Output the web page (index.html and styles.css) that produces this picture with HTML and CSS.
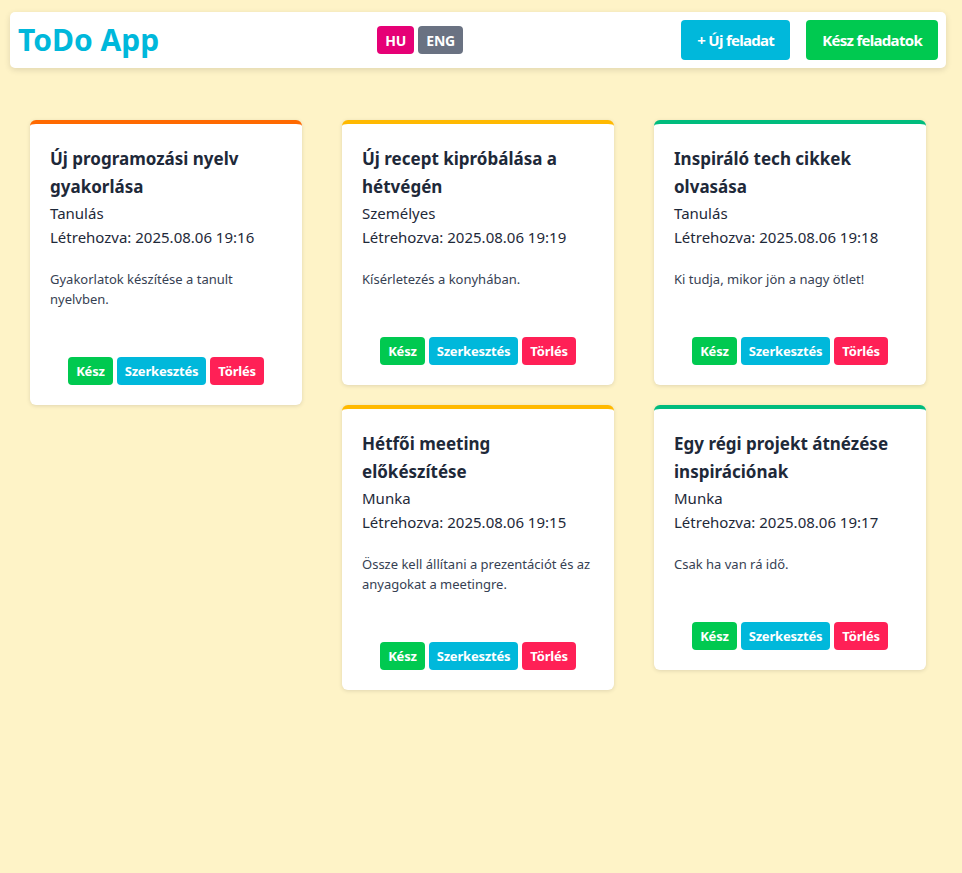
FILE: index.html
```html
<!DOCTYPE html>
<html lang="hu">
<head>
<meta charset="utf-8">
<title>ToDo App</title>
<link rel="stylesheet" href="styles.css">
</head>
<body>
<header class="topbar">
  <h1 class="logo">ToDo App</h1>
  <div class="lang">
    <button class="lang-btn lang-hu">HU</button>
    <button class="lang-btn lang-eng">ENG</button>
  </div>
  <div class="actions">
    <button class="act-btn act-new">+ Új feladat</button>
    <button class="act-btn act-done">Kész feladatok</button>
  </div>
</header>

<main class="board">
  <div class="col">
    <article class="card c-orange">
      <h2 class="card-title">Új programozási nyelv gyakorlása</h2>
      <p class="meta">Tanulás</p>
      <p class="meta">Létrehozva: 2025.08.06 19:16</p>
      <p class="desc">Gyakorlatok készítése a tanult nyelvben.</p>
      <div class="card-btns">
        <button class="cb cb-done">Kész</button>
        <button class="cb cb-edit">Szerkesztés</button>
        <button class="cb cb-del">Törlés</button>
      </div>
    </article>
  </div>
  <div class="col">
    <article class="card c-amber">
      <h2 class="card-title">Új recept kipróbálása a hétvégén</h2>
      <p class="meta">Személyes</p>
      <p class="meta">Létrehozva: 2025.08.06 19:19</p>
      <p class="desc">Kísérletezés a konyhában.</p>
      <div class="card-btns">
        <button class="cb cb-done">Kész</button>
        <button class="cb cb-edit">Szerkesztés</button>
        <button class="cb cb-del">Törlés</button>
      </div>
    </article>
    <article class="card c-amber">
      <h2 class="card-title">Hétfői meeting előkészítése</h2>
      <p class="meta">Munka</p>
      <p class="meta">Létrehozva: 2025.08.06 19:15</p>
      <p class="desc">Össze kell állítani a prezentációt és az anyagokat a meetingre.</p>
      <div class="card-btns">
        <button class="cb cb-done">Kész</button>
        <button class="cb cb-edit">Szerkesztés</button>
        <button class="cb cb-del">Törlés</button>
      </div>
    </article>
  </div>
  <div class="col">
    <article class="card c-emerald">
      <h2 class="card-title">Inspiráló tech cikkek olvasása</h2>
      <p class="meta">Tanulás</p>
      <p class="meta">Létrehozva: 2025.08.06 19:18</p>
      <p class="desc">Ki tudja, mikor jön a nagy ötlet!</p>
      <div class="card-btns">
        <button class="cb cb-done">Kész</button>
        <button class="cb cb-edit">Szerkesztés</button>
        <button class="cb cb-del">Törlés</button>
      </div>
    </article>
    <article class="card c-emerald">
      <h2 class="card-title">Egy régi projekt átnézése inspirációnak</h2>
      <p class="meta">Munka</p>
      <p class="meta">Létrehozva: 2025.08.06 19:17</p>
      <p class="desc">Csak ha van rá idő.</p>
      <div class="card-btns">
        <button class="cb cb-done">Kész</button>
        <button class="cb cb-edit">Szerkesztés</button>
        <button class="cb cb-del">Törlés</button>
      </div>
    </article>
  </div>
</main>
</body>
</html>
```

FILE: styles.css
```css
* { box-sizing: border-box; }

html, body {
  margin: 0;
  padding: 0;
}

body {
  background: #fef3c7;
  font-family: "Noto Sans", "Open Sans", sans-serif;
  color: #1e2939;
  min-height: 873px;
  padding-top: 12px;
}

button {
  font-family: inherit;
  border: none;
  cursor: pointer;
  color: #fff;
  font-weight: 700;
}

.topbar {
  margin: 0 16px 0 10px;
  height: 56px;
  background: #fff;
  border-radius: 5px;
  box-shadow: 0 2px 6px rgba(0, 0, 0, 0.12);
  padding: 0 8px;
  display: flex;
  align-items: center;
  justify-content: space-between;
}

.logo {
  margin: 0;
  font-size: 30px;
  line-height: 36px;
  font-weight: 700;
  color: #00b8db;
}

.lang {
  display: flex;
  gap: 4px;
}

.lang-btn {
  height: 28px;
  padding: 0 8px;
  font-size: 14px;
  letter-spacing: -0.2px;
  border-radius: 4px;
}
.lang-hu { background: #e60076; }
.lang-eng { background: #6a7282; }

.actions {
  display: flex;
  gap: 16px;
}

.act-btn {
  height: 40px;
  padding: 0 16px;
  font-size: 15px;
  letter-spacing: -0.7px;
  border-radius: 4px;
}
.act-new { background: #00b8db; }
.act-done { background: #00c950; }

.board {
  display: flex;
  gap: 40px;
  padding: 52px 36px 0 30px;
  align-items: flex-start;
}

.col {
  width: 272px;
  display: flex;
  flex-direction: column;
  gap: 20px;
}

.card {
  background: #fff;
  border-radius: 6px;
  border-top: 4px solid;
  box-shadow: 0 1px 4px rgba(0, 0, 0, 0.12);
  padding: 21px 20px 20px;
}
.c-orange { border-top-color: #ff6900; }
.c-amber { border-top-color: #ffb900; }
.c-emerald { border-top-color: #00bc7d; }

.card-title {
  margin: 0;
  font-size: 17px;
  line-height: 28px;
  font-weight: 700;
  color: #1e2939;
}

.meta {
  margin: 0;
  font-size: 15px;
  line-height: 24px;
  color: #1e2939;
}

.desc {
  margin: 20px 0 0;
  font-size: 13px;
  line-height: 20px;
  color: #364153;
}

.card-btns {
  margin-top: 48px;
  display: flex;
  justify-content: center;
  gap: 4px;
}

.cb {
  height: 28px;
  padding: 0 8px;
  font-size: 13px;
  letter-spacing: -0.2px;
  border-radius: 4px;
}
.cb-done { background: #00c950; }
.cb-edit { background: #00b8db; }
.cb-del { background: #ff2056; }
```
